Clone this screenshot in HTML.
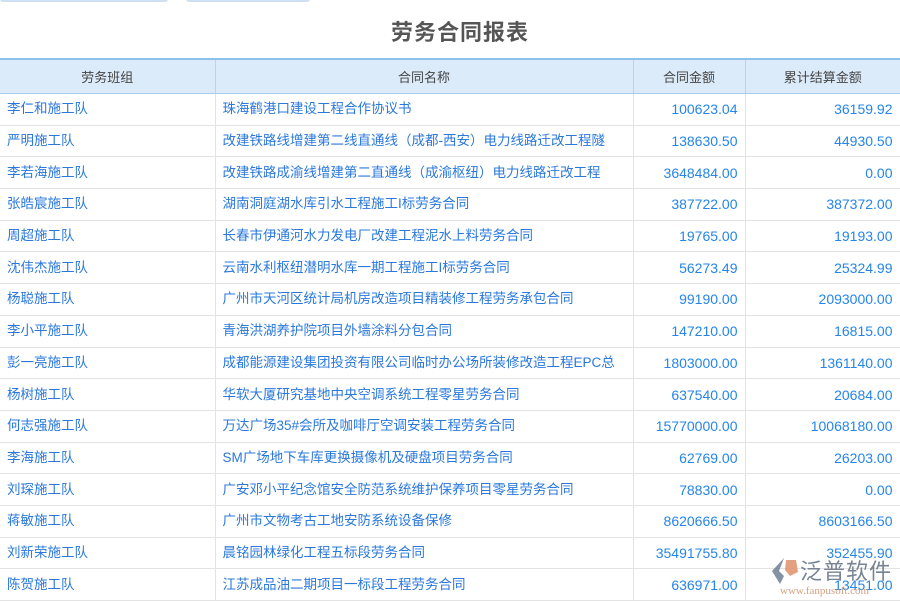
<!DOCTYPE html>
<html><head><meta charset="utf-8"><style>
body{margin:0;width:900px;height:600px;overflow:hidden;background:#fff;font-family:"Liberation Sans","Noto Sans CJK SC",sans-serif;position:relative}
.tab1{position:absolute;left:0;top:-2px;width:168px;height:4px;background:#cfe0f2;border-radius:0 0 3px 3px}
.tab2{position:absolute;left:186px;top:-2px;width:124px;height:4px;background:#cfe0f2;border-radius:0 0 3px 3px}
h1{position:absolute;top:15px;left:0;width:920px;text-align:center;margin:0;font-size:22px;font-weight:bold;color:#555;letter-spacing:1px}
table{position:absolute;top:58px;left:0;border-collapse:collapse;table-layout:fixed;width:900px}
th{height:31px;background:#dcebf9;color:#444;font-weight:normal;font-size:13px;border-top:2px solid #8cc1ea;border-bottom:1px solid #a9cdee;border-right:1px solid #b8d4ee}
td{height:30.7px;line-height:30px;padding:0 7px;font-size:13.5px;color:#2a78dc;border-bottom:1px solid #e3e3e3;border-right:1px solid #e3e3e3;white-space:nowrap;overflow:hidden;vertical-align:middle}
td span{display:inline-block;line-height:30px;vertical-align:top}
td.n{text-align:right;color:#2585ea;font-size:14px}
.wm{position:absolute;left:770px;top:552px;width:130px;height:48px}
</style></head><body>
<div class="tab1"></div><div class="tab2"></div>
<h1>劳务合同报表</h1>
<table>
<colgroup><col style="width:215px"><col style="width:418px"><col style="width:112px"><col style="width:155px"></colgroup>
<tr><th>劳务班组</th><th>合同名称</th><th>合同金额</th><th style="border-right:none">累计结算金额</th></tr>
<tr><td>李仁和施工队</td><td>珠海鹤港口建设工程合作协议书</td><td class="n">100623.04</td><td class="n">36159.92</td></tr>
<tr><td>严明施工队</td><td>改建铁路线增建第二线直通线（成都-西安）电力线路迁改工程隧</td><td class="n">138630.50</td><td class="n">44930.50</td></tr>
<tr><td>李若海施工队</td><td>改建铁路成渝线增建第二直通线（成渝枢纽）电力线路迁改工程</td><td class="n">3648484.00</td><td class="n">0.00</td></tr>
<tr><td>张皓宸施工队</td><td>湖南洞庭湖水库引水工程施工I标劳务合同</td><td class="n">387722.00</td><td class="n">387372.00</td></tr>
<tr><td>周超施工队</td><td>长春市伊通河水力发电厂改建工程泥水上料劳务合同</td><td class="n">19765.00</td><td class="n">19193.00</td></tr>
<tr><td>沈伟杰施工队</td><td>云南水利枢纽潜明水库一期工程施工I标劳务合同</td><td class="n">56273.49</td><td class="n">25324.99</td></tr>
<tr><td>杨聪施工队</td><td>广州市天河区统计局机房改造项目精装修工程劳务承包合同</td><td class="n">99190.00</td><td class="n">2093000.00</td></tr>
<tr><td>李小平施工队</td><td>青海洪湖养护院项目外墙涂料分包合同</td><td class="n">147210.00</td><td class="n">16815.00</td></tr>
<tr><td>彭一亮施工队</td><td>成都能源建设集团投资有限公司临时办公场所装修改造工程EPC总</td><td class="n">1803000.00</td><td class="n">1361140.00</td></tr>
<tr><td>杨树施工队</td><td>华软大厦研究基地中央空调系统工程零星劳务合同</td><td class="n">637540.00</td><td class="n">20684.00</td></tr>
<tr><td>何志强施工队</td><td>万达广场35#会所及咖啡厅空调安装工程劳务合同</td><td class="n">15770000.00</td><td class="n">10068180.00</td></tr>
<tr><td>李海施工队</td><td>SM广场地下车库更换摄像机及硬盘项目劳务合同</td><td class="n">62769.00</td><td class="n">26203.00</td></tr>
<tr><td>刘琛施工队</td><td>广安邓小平纪念馆安全防范系统维护保养项目零星劳务合同</td><td class="n">78830.00</td><td class="n">0.00</td></tr>
<tr><td>蒋敏施工队</td><td>广州市文物考古工地安防系统设备保修</td><td class="n">8620666.50</td><td class="n">8603166.50</td></tr>
<tr><td>刘新荣施工队</td><td>晨铭园林绿化工程五标段劳务合同</td><td class="n">35491755.80</td><td class="n">352455.90</td></tr>
<tr><td>陈贺施工队</td><td>江苏成品油二期项目一标段工程劳务合同</td><td class="n">636971.00</td><td class="n">13451.00</td></tr>
</table>
<div class="wm">
<svg width="30" height="30" viewBox="0 0 30 30" style="position:absolute;left:0;top:4px;opacity:.85"><path d="M14 2 L2 15 L10 28 L14 20 L9 15 Z" fill="#6f7f95"/><path d="M16 4 L26 4 L28 16 L20 20 L15 14 Z" fill="#e0916b"/></svg>
<div style="position:absolute;left:30px;top:2px;font-size:22px;color:#6a7688;letter-spacing:1px;opacity:.9">泛普软件</div>
<div style="position:absolute;left:10px;top:33px;font-size:11px;font-family:'Liberation Serif',serif;color:#d0906c;opacity:.85">www.fanpusoft.com</div>
</div>
</body></html>
